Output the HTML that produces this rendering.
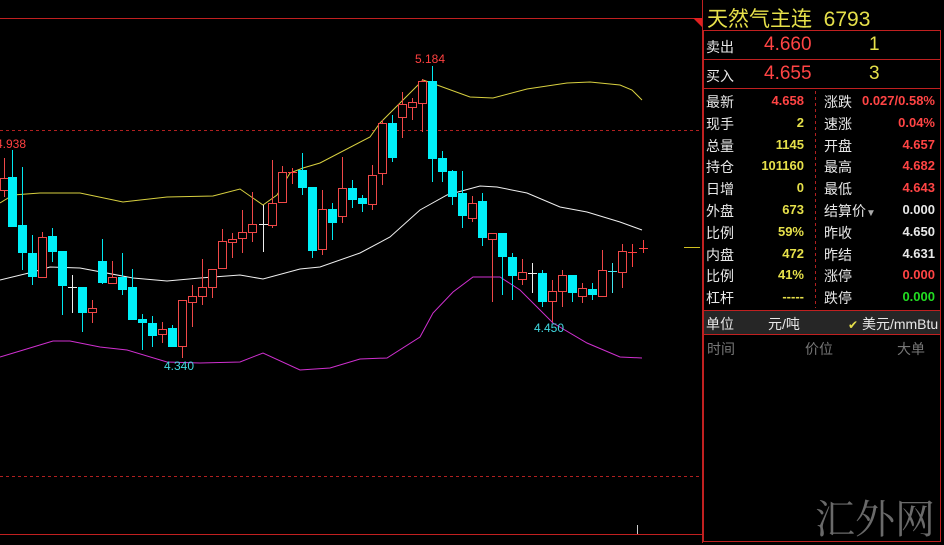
<!DOCTYPE html>
<html><head><meta charset="utf-8"><style>
html,body{margin:0;padding:0;background:#000;width:944px;height:543px;overflow:hidden;font-family:"Liberation Sans","Noto Sans CJK SC",sans-serif}
.p{position:absolute;white-space:nowrap}
.l{color:#e8e8e8;font-size:14px}
.y{color:#e6e04a;font-weight:bold;font-size:13px}
.r{color:#ff4444;font-weight:bold;font-size:13px}
.w{color:#e8e8e8;font-weight:bold;font-size:13px}
.g{color:#22dd22;font-weight:bold;font-size:13px}
</style></head><body>
<svg width="944" height="543" style="position:absolute;left:0;top:0" xmlns="http://www.w3.org/2000/svg">
<line x1="0" y1="18.5" x2="702" y2="18.5" stroke="#c02020"/>
<line x1="0" y1="130.5" x2="702" y2="130.5" stroke="#b02020" stroke-dasharray="3,3"/>
<line x1="0" y1="476.5" x2="702" y2="476.5" stroke="#b02020" stroke-dasharray="3,3"/>
<line x1="0" y1="534.5" x2="702" y2="534.5" stroke="#c02020"/>
<line x1="702.5" y1="0" x2="702.5" y2="543" stroke="#c02020"/>
<polygon points="693,18 702,18 702,27" fill="#e02020"/>
<line x1="684" y1="247.5" x2="700" y2="247.5" stroke="#d0c020"/>
<line x1="637.5" y1="525" x2="637.5" y2="534" stroke="#ccc"/>
<rect x="703.5" y="30.5" width="237" height="511" fill="none" stroke="#c02020"/>
<line x1="703" y1="59.5" x2="940" y2="59.5" stroke="#c02020"/>
<line x1="703" y1="88.5" x2="940" y2="88.5" stroke="#c02020"/>
<rect x="704" y="310" width="236" height="24" fill="#262626"/>
<line x1="703" y1="310.5" x2="940" y2="310.5" stroke="#c02020"/>
<line x1="703" y1="334.5" x2="940" y2="334.5" stroke="#c02020"/>
<line x1="815.5" y1="91" x2="815.5" y2="308" stroke="#b02020" stroke-dasharray="3,3"/>
<polyline fill="none" stroke="#d8d040" stroke-width="1" points="0,203 13,195 40,193 80,193 123,202 167,197 213,196 240,189 263,205 277,195 290,173 303,168 320,163 370,137 380,123 403,100 423,80 437,85 470,97 493,98 527,89 567,83 590,82 620,85 632,90 642,100"/>
<polyline fill="none" stroke="#f0f0f0" stroke-width="1" points="0,280 33,272 50,267 80,268 133,278 167,281 200,278 240,275 263,279 300,269 320,267 360,253 390,237 420,210 447,195 480,186 497,187 527,193 560,207 587,212 620,222 642,230"/>
<polyline fill="none" stroke="#d030d0" stroke-width="1" points="0,357 20,351 53,341 70,341 100,347 127,350 167,362 200,363 240,362 263,353 300,370 330,368 360,359 387,358 420,337 433,313 453,292 473,277 500,277 520,290 553,323 587,343 620,357 642,358"/>
<g id="c" stroke-width="1"></g>
<g fill="#ff4040" font-size="12" font-family="Liberation Sans,sans-serif">
<text x="415" y="63">5.184</text><text x="-4" y="148">4.938</text></g>
<g fill="#40d8e0" font-size="12" font-family="Liberation Sans,sans-serif">
<text x="164" y="370">4.340</text><text x="534" y="332">4.450</text></g>
</svg>
<div class="p" style="left:707px;top:3px;color:#e6e04a;font-size:21px">天然气主连&nbsp; 6793</div>
<div class="p l" style="left:706px;top:37px">卖出</div>
<div class="p" style="left:764px;top:34px;color:#ff4444;font-size:19px">4.660</div>
<div class="p" style="left:869px;top:34px;color:#e6e04a;font-size:19px">1</div>
<div class="p l" style="left:706px;top:66px">买入</div>
<div class="p" style="left:764px;top:63px;color:#ff4444;font-size:19px">4.655</div>
<div class="p" style="left:869px;top:63px;color:#e6e04a;font-size:19px">3</div>
<div id="rows"></div>
<div class="p l" style="left:706px;top:314px">单位</div>
<div class="p l" style="left:768px;top:314px">元/吨</div>
<div class="p l" style="left:848px;top:314px"><span style="color:#e6e04a;font-size:12px">✔</span> 美元/mmBtu</div>
<div class="p" style="left:707px;top:339px;color:#777;font-size:14px">时间</div>
<div class="p" style="left:805px;top:339px;color:#777;font-size:14px">价位</div>
<div class="p" style="left:897px;top:339px;color:#777;font-size:14px">大单</div>
<div class="p" style="left:815px;top:488px;color:#6a6a6a;font-size:40px;font-family:'Liberation Serif','Noto Serif CJK SC',serif">汇外网</div>
<script>
var rows=[["最新","4.658","r","涨跌","0.027/0.58%","r"],["现手","2","y","速涨","0.04%","r"],["总量","1145","y","开盘","4.657","r"],["持仓","101160","y","最高","4.682","r"],["日增","0","y","最低","4.643","r"],["外盘","673","y","结算价<span style='color:#aaa;font-size:10px'>▼</span>","0.000","w"],["比例","59%","y","昨收","4.650","w"],["内盘","472","y","昨结","4.631","w"],["比例","41%","y","涨停","0.000","r"],["杠杆","-----","y","跌停","0.000","g"]];
var h="";rows.forEach(function(r,i){var t=92+i*21.8;
h+='<div class="p l" style="left:706px;top:'+t+'px">'+r[0]+'</div>';
h+='<div class="p '+r[2]+'" style="right:140px;top:'+(t+1)+'px">'+r[1]+'</div>';
h+='<div class="p l" style="left:824px;top:'+t+'px">'+r[3]+'</div>';
h+='<div class="p '+r[5]+'" style="right:9px;top:'+(t+1)+'px">'+r[4]+'</div>';});
document.getElementById("rows").innerHTML=h;
var C=[["r",0,178,190,158,197],["c",8,177,227,150,227],["c",18,225,253,167,270],["c",28,253,277,235,285],["r",38,237,277,232,278],["c",48,236,252,228,262],["c",58,251,286,251,315],["x",68,287,287,275,313,"#eee"],["c",78,287,313,287,332],["r",88,308,312,300,323],["c",98,261,283,239,284],["r",108,277,283,261,283],["c",118,277,290,253,295],["c",128,287,320,269,320],["c",138,319,323,314,350],["c",148,323,336,316,347],["r",158,329,334,322,343],["c",168,328,347,325,347],["r",178,300,346,300,358],["r",188,296,302,285,327],["r",198,287,296,259,305],["r",208,269,287,269,298],["r",218,241,268,229,268],["r",228,239,242,233,258],["r",238,232,238,210,253],["r",248,224,232,192,242],["x",259,224,224,205,252,"#eee"],["r",268,203,225,160,228],["r",278,172,202,166,202],["x",288,172,172,168,184,"#ff4040"],["c",298,170,188,153,195],["c",308,187,251,187,258],["r",318,209,249,190,255],["c",328,209,223,203,240],["r",338,188,216,157,223],["c",348,188,200,180,208],["c",358,198,204,195,212],["r",368,175,204,165,210],["r",378,123,173,120,185],["c",388,123,158,115,162],["r",398,104,117,92,138],["r",408,102,107,98,120],["r",418,81,103,79,132],["c",428,81,159,66,182],["c",438,158,172,151,182],["c",448,171,197,170,205],["c",458,193,216,171,228],["r",468,203,218,196,222],["c",478,201,238,193,246],["r",488,233,239,233,302],["c",498,233,257,233,295],["c",508,257,276,253,300],["r",518,272,279,259,285],["x",528,273,273,263,293,"#eee"],["c",538,273,302,270,307],["r",548,291,301,280,322],["r",558,275,291,270,307],["c",568,275,293,275,302],["r",578,288,296,283,303],["c",588,289,295,283,300],["r",598,270,296,250,297],["x",608,271,271,263,293,"#40e8f0"],["r",618,251,272,244,288],["x",628,252,252,244,267,"#ff4040"],["x",639,248,248,240,253,"#ff4040"]];
var s="";C.forEach(function(c){var L=c[1],cx=L+4.5;
if(c[0]=="x"){s+='<line x1="'+cx+'" y1="'+c[4]+'" x2="'+cx+'" y2="'+c[5]+'" stroke="'+c[6]+'"/><line x1="'+L+'" y1="'+(c[2]+.5)+'" x2="'+(L+9)+'" y2="'+(c[2]+.5)+'" stroke="'+c[6]+'"/>';}
else if(c[0]=="r"){s+='<line x1="'+cx+'" y1="'+c[4]+'" x2="'+cx+'" y2="'+c[5]+'" stroke="#f04848"/><rect x="'+(L+.5)+'" y="'+(c[2]+.5)+'" width="8" height="'+Math.max(c[3]-c[2],2)+'" fill="#000" stroke="#f04848"/>';}
else{s+='<line x1="'+cx+'" y1="'+c[4]+'" x2="'+cx+'" y2="'+c[5]+'" stroke="#00e8f0"/><rect x="'+L+'" y="'+c[2]+'" width="9" height="'+Math.max(c[3]-c[2],3)+'" fill="#00f0f8"/>';}});
document.getElementById("c").innerHTML=s;
</script>
</body></html>
